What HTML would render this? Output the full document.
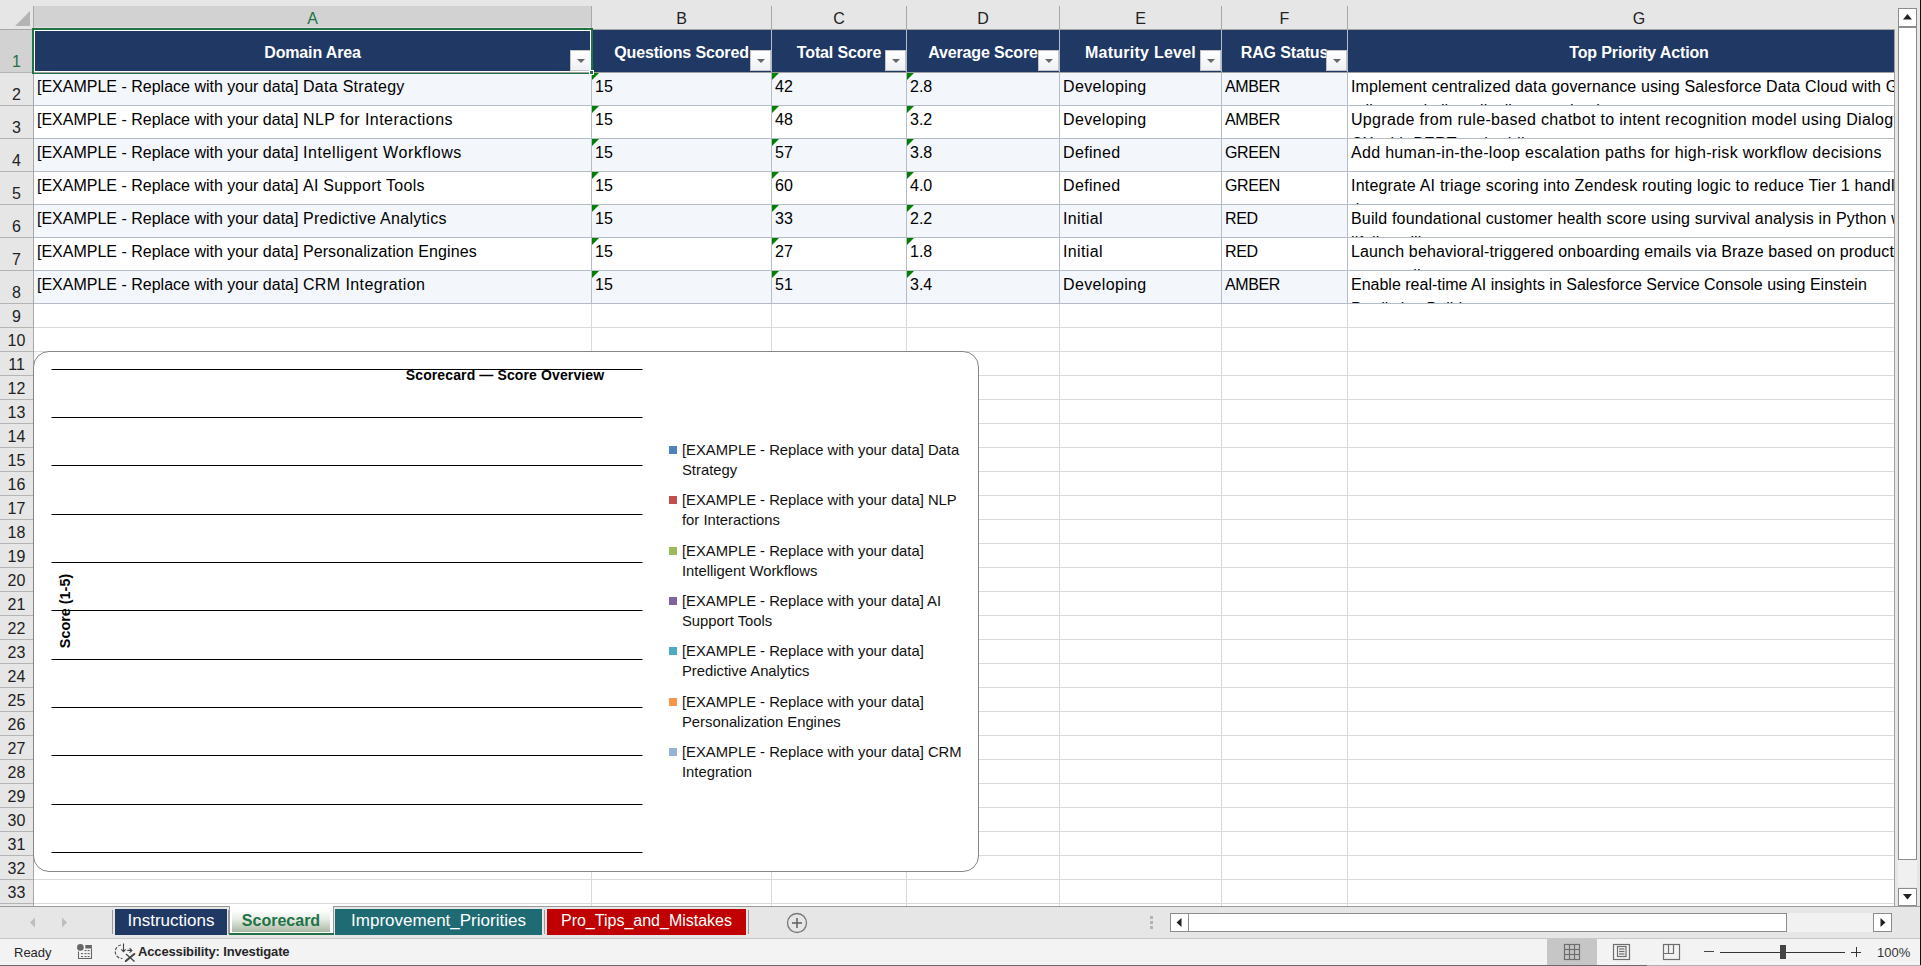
<!DOCTYPE html>
<html><head><meta charset="utf-8"><style>
*{margin:0;padding:0;box-sizing:border-box}
html,body{width:1921px;height:966px;overflow:hidden;background:#fff;font-family:"Liberation Sans",sans-serif;color:#000}
div{position:absolute}
.t{white-space:nowrap;line-height:18px;font-size:16px}
.hd{color:#fff;font-weight:bold;font-size:16px;letter-spacing:-0.15px;text-align:center;line-height:18px;white-space:nowrap}
.cl{font-size:16px;line-height:18px;text-align:center;color:#222;white-space:nowrap}
.rn{font-size:16px;line-height:18px;text-align:center;color:#222;white-space:nowrap}
.dd{width:21px;height:21px;border:1px solid #c4c4c4;background:linear-gradient(#fff,#eef0f4)}
.dd:after{content:"";position:absolute;left:6px;top:8px;border-left:4px solid transparent;border-right:4px solid transparent;border-top:4px solid #666}
.gt{width:0;height:0;border-top:7px solid #008000;border-right:7px solid transparent}
</style></head>
<body>
<div style="left:0px;top:0px;width:1921px;height:30px;background:#e6e6e6"></div>
<svg style="position:absolute;left:0;top:0" width="34" height="30"><polygon points="30,11 30,26 15,26" fill="#b4b4b4"/></svg>
<div style="left:34px;top:6px;width:557px;height:22px;background:#d2d2d2"></div>
<div style="left:34px;top:27px;width:557px;height:1px;background:#e1dede"></div>
<div style="left:33px;top:6px;width:1px;height:23px;background:#a9a9a9"></div>
<div style="left:591px;top:6px;width:1px;height:23px;background:#a9a9a9"></div>
<div style="left:771px;top:6px;width:1px;height:23px;background:#a9a9a9"></div>
<div style="left:906px;top:6px;width:1px;height:23px;background:#a9a9a9"></div>
<div style="left:1059px;top:6px;width:1px;height:23px;background:#a9a9a9"></div>
<div style="left:1221px;top:6px;width:1px;height:23px;background:#a9a9a9"></div>
<div style="left:1347px;top:6px;width:1px;height:23px;background:#a9a9a9"></div>
<div style="left:0px;top:29px;width:1894px;height:1px;background:#a6a6a6"></div>
<div style="left:0px;top:30px;width:33px;height:876px;background:#e6e6e6"></div>
<div style="left:0px;top:30px;width:33px;height:42px;background:#d2d2d2"></div>
<div style="left:33px;top:30px;width:1px;height:876px;background:#a9a9a9"></div>
<div style="left:0px;top:72px;width:33px;height:1px;background:#b4b4b4"></div>
<div style="left:0px;top:105px;width:33px;height:1px;background:#b4b4b4"></div>
<div style="left:0px;top:138px;width:33px;height:1px;background:#b4b4b4"></div>
<div style="left:0px;top:171px;width:33px;height:1px;background:#b4b4b4"></div>
<div style="left:0px;top:204px;width:33px;height:1px;background:#b4b4b4"></div>
<div style="left:0px;top:237px;width:33px;height:1px;background:#b4b4b4"></div>
<div style="left:0px;top:270px;width:33px;height:1px;background:#b4b4b4"></div>
<div style="left:0px;top:303px;width:33px;height:1px;background:#b4b4b4"></div>
<div style="left:0px;top:327px;width:33px;height:1px;background:#b4b4b4"></div>
<div style="left:0px;top:351px;width:33px;height:1px;background:#b4b4b4"></div>
<div style="left:0px;top:375px;width:33px;height:1px;background:#b4b4b4"></div>
<div style="left:0px;top:399px;width:33px;height:1px;background:#b4b4b4"></div>
<div style="left:0px;top:423px;width:33px;height:1px;background:#b4b4b4"></div>
<div style="left:0px;top:447px;width:33px;height:1px;background:#b4b4b4"></div>
<div style="left:0px;top:471px;width:33px;height:1px;background:#b4b4b4"></div>
<div style="left:0px;top:495px;width:33px;height:1px;background:#b4b4b4"></div>
<div style="left:0px;top:519px;width:33px;height:1px;background:#b4b4b4"></div>
<div style="left:0px;top:543px;width:33px;height:1px;background:#b4b4b4"></div>
<div style="left:0px;top:567px;width:33px;height:1px;background:#b4b4b4"></div>
<div style="left:0px;top:591px;width:33px;height:1px;background:#b4b4b4"></div>
<div style="left:0px;top:615px;width:33px;height:1px;background:#b4b4b4"></div>
<div style="left:0px;top:639px;width:33px;height:1px;background:#b4b4b4"></div>
<div style="left:0px;top:663px;width:33px;height:1px;background:#b4b4b4"></div>
<div style="left:0px;top:687px;width:33px;height:1px;background:#b4b4b4"></div>
<div style="left:0px;top:711px;width:33px;height:1px;background:#b4b4b4"></div>
<div style="left:0px;top:735px;width:33px;height:1px;background:#b4b4b4"></div>
<div style="left:0px;top:759px;width:33px;height:1px;background:#b4b4b4"></div>
<div style="left:0px;top:783px;width:33px;height:1px;background:#b4b4b4"></div>
<div style="left:0px;top:807px;width:33px;height:1px;background:#b4b4b4"></div>
<div style="left:0px;top:831px;width:33px;height:1px;background:#b4b4b4"></div>
<div style="left:0px;top:855px;width:33px;height:1px;background:#b4b4b4"></div>
<div style="left:0px;top:879px;width:33px;height:1px;background:#b4b4b4"></div>
<div style="left:0px;top:903px;width:33px;height:1px;background:#b4b4b4"></div>
<div class="cl" style="left:34px;top:10px;width:557px;color:#217346;">A</div>
<div class="cl" style="left:592px;top:10px;width:179px;">B</div>
<div class="cl" style="left:772px;top:10px;width:134px;">C</div>
<div class="cl" style="left:907px;top:10px;width:152px;">D</div>
<div class="cl" style="left:1060px;top:10px;width:161px;">E</div>
<div class="cl" style="left:1222px;top:10px;width:125px;">F</div>
<div class="cl" style="left:1348px;top:10px;width:582px;">G</div>
<div class="rn" style="left:0;top:53px;width:33px;color:#217346;">1</div>
<div class="rn" style="left:0;top:86px;width:33px;">2</div>
<div class="rn" style="left:0;top:119px;width:33px;">3</div>
<div class="rn" style="left:0;top:152px;width:33px;">4</div>
<div class="rn" style="left:0;top:185px;width:33px;">5</div>
<div class="rn" style="left:0;top:218px;width:33px;">6</div>
<div class="rn" style="left:0;top:251px;width:33px;">7</div>
<div class="rn" style="left:0;top:284px;width:33px;">8</div>
<div class="rn" style="left:0;top:308px;width:33px;">9</div>
<div class="rn" style="left:0;top:332px;width:33px;">10</div>
<div class="rn" style="left:0;top:356px;width:33px;">11</div>
<div class="rn" style="left:0;top:380px;width:33px;">12</div>
<div class="rn" style="left:0;top:404px;width:33px;">13</div>
<div class="rn" style="left:0;top:428px;width:33px;">14</div>
<div class="rn" style="left:0;top:452px;width:33px;">15</div>
<div class="rn" style="left:0;top:476px;width:33px;">16</div>
<div class="rn" style="left:0;top:500px;width:33px;">17</div>
<div class="rn" style="left:0;top:524px;width:33px;">18</div>
<div class="rn" style="left:0;top:548px;width:33px;">19</div>
<div class="rn" style="left:0;top:572px;width:33px;">20</div>
<div class="rn" style="left:0;top:596px;width:33px;">21</div>
<div class="rn" style="left:0;top:620px;width:33px;">22</div>
<div class="rn" style="left:0;top:644px;width:33px;">23</div>
<div class="rn" style="left:0;top:668px;width:33px;">24</div>
<div class="rn" style="left:0;top:692px;width:33px;">25</div>
<div class="rn" style="left:0;top:716px;width:33px;">26</div>
<div class="rn" style="left:0;top:740px;width:33px;">27</div>
<div class="rn" style="left:0;top:764px;width:33px;">28</div>
<div class="rn" style="left:0;top:788px;width:33px;">29</div>
<div class="rn" style="left:0;top:812px;width:33px;">30</div>
<div class="rn" style="left:0;top:836px;width:33px;">31</div>
<div class="rn" style="left:0;top:860px;width:33px;">32</div>
<div class="rn" style="left:0;top:884px;width:33px;">33</div>
<div style="left:591px;top:304px;width:1px;height:602px;background:#dadada"></div>
<div style="left:771px;top:304px;width:1px;height:602px;background:#dadada"></div>
<div style="left:906px;top:304px;width:1px;height:602px;background:#dadada"></div>
<div style="left:1059px;top:304px;width:1px;height:602px;background:#dadada"></div>
<div style="left:1221px;top:304px;width:1px;height:602px;background:#dadada"></div>
<div style="left:1347px;top:304px;width:1px;height:602px;background:#dadada"></div>
<div style="left:34px;top:327px;width:1860px;height:1px;background:#dadada"></div>
<div style="left:34px;top:351px;width:1860px;height:1px;background:#dadada"></div>
<div style="left:34px;top:375px;width:1860px;height:1px;background:#dadada"></div>
<div style="left:34px;top:399px;width:1860px;height:1px;background:#dadada"></div>
<div style="left:34px;top:423px;width:1860px;height:1px;background:#dadada"></div>
<div style="left:34px;top:447px;width:1860px;height:1px;background:#dadada"></div>
<div style="left:34px;top:471px;width:1860px;height:1px;background:#dadada"></div>
<div style="left:34px;top:495px;width:1860px;height:1px;background:#dadada"></div>
<div style="left:34px;top:519px;width:1860px;height:1px;background:#dadada"></div>
<div style="left:34px;top:543px;width:1860px;height:1px;background:#dadada"></div>
<div style="left:34px;top:567px;width:1860px;height:1px;background:#dadada"></div>
<div style="left:34px;top:591px;width:1860px;height:1px;background:#dadada"></div>
<div style="left:34px;top:615px;width:1860px;height:1px;background:#dadada"></div>
<div style="left:34px;top:639px;width:1860px;height:1px;background:#dadada"></div>
<div style="left:34px;top:663px;width:1860px;height:1px;background:#dadada"></div>
<div style="left:34px;top:687px;width:1860px;height:1px;background:#dadada"></div>
<div style="left:34px;top:711px;width:1860px;height:1px;background:#dadada"></div>
<div style="left:34px;top:735px;width:1860px;height:1px;background:#dadada"></div>
<div style="left:34px;top:759px;width:1860px;height:1px;background:#dadada"></div>
<div style="left:34px;top:783px;width:1860px;height:1px;background:#dadada"></div>
<div style="left:34px;top:807px;width:1860px;height:1px;background:#dadada"></div>
<div style="left:34px;top:831px;width:1860px;height:1px;background:#dadada"></div>
<div style="left:34px;top:855px;width:1860px;height:1px;background:#dadada"></div>
<div style="left:34px;top:879px;width:1860px;height:1px;background:#dadada"></div>
<div style="left:34px;top:903px;width:1860px;height:1px;background:#dadada"></div>
<div style="left:34px;top:30px;width:1860px;height:42px;background:#203864"></div>
<div style="left:591px;top:30px;width:1px;height:42px;background:#b4bcc8"></div>
<div style="left:771px;top:30px;width:1px;height:42px;background:#b4bcc8"></div>
<div style="left:906px;top:30px;width:1px;height:42px;background:#b4bcc8"></div>
<div style="left:1059px;top:30px;width:1px;height:42px;background:#b4bcc8"></div>
<div style="left:1221px;top:30px;width:1px;height:42px;background:#b4bcc8"></div>
<div style="left:1347px;top:30px;width:1px;height:42px;background:#b4bcc8"></div>
<div style="left:34px;top:72px;width:1860px;height:1px;background:#a0a0a0"></div>
<div class="hd" style="left:34px;top:44px;width:557px;">Domain Area</div>
<div class="hd" style="left:592px;top:44px;width:179px;">Questions Scored</div>
<div class="hd" style="left:772px;top:44px;width:134px;">Total Score</div>
<div class="hd" style="left:907px;top:44px;width:152px;">Average Score</div>
<div class="hd" style="left:1060px;top:44px;width:161px;letter-spacing:0.25px;">Maturity Level</div>
<div class="hd" style="left:1222px;top:44px;width:125px;">RAG Status</div>
<div class="hd" style="left:1348px;top:44px;width:582px;">Top Priority Action</div>
<div class="dd" style="left:570px;top:50px"></div>
<div class="dd" style="left:750px;top:50px"></div>
<div class="dd" style="left:885px;top:50px"></div>
<div class="dd" style="left:1038px;top:50px"></div>
<div class="dd" style="left:1200px;top:50px"></div>
<div class="dd" style="left:1326px;top:50px"></div>
<div style="left:34px;top:73px;width:1313px;height:32px;background:#f3f6fb"></div>
<div class="t" style="left:37px;top:78px">[EXAMPLE - Replace with your data] <span style="letter-spacing:0.3px">Data Strategy</span></div>
<div class="t" style="left:595px;top:78px">15</div>
<div class="t" style="left:775px;top:78px">42</div>
<div class="t" style="left:910px;top:78px">2.8</div>
<div class="t" style="left:1063px;top:78px"><span style="letter-spacing:0.35px">Developing</span></div>
<div class="t" style="left:1225px;top:78px"><span style="letter-spacing:-0.4px">AMBER</span></div>
<div style="left:1348px;top:73px;width:546px;height:32px;overflow:hidden"><div class="t" style="left:3px;top:5px;letter-spacing:0.14px">Implement centralized data governance using Salesforce Data Cloud with Genie</div><div class="t" style="left:3px;top:29px;letter-spacing:0.14px">rollout and all quality lineage checks</div></div>
<div style="left:34px;top:105px;width:1860px;height:1px;background:#b4bcc8"></div>
<div style="left:591px;top:73px;width:1px;height:32px;background:#b4bcc8"></div>
<div style="left:771px;top:73px;width:1px;height:32px;background:#b4bcc8"></div>
<div style="left:906px;top:73px;width:1px;height:32px;background:#b4bcc8"></div>
<div style="left:1059px;top:73px;width:1px;height:32px;background:#b4bcc8"></div>
<div style="left:1221px;top:73px;width:1px;height:32px;background:#b4bcc8"></div>
<div style="left:1347px;top:73px;width:1px;height:32px;background:#b4bcc8"></div>
<div class="gt" style="left:592px;top:73px"></div>
<div class="gt" style="left:772px;top:73px"></div>
<div class="gt" style="left:907px;top:73px"></div>
<div style="left:34px;top:106px;width:1313px;height:32px;background:#ffffff"></div>
<div class="t" style="left:37px;top:111px">[EXAMPLE - Replace with your data] <span style="letter-spacing:0.45px">NLP for Interactions</span></div>
<div class="t" style="left:595px;top:111px">15</div>
<div class="t" style="left:775px;top:111px">48</div>
<div class="t" style="left:910px;top:111px">3.2</div>
<div class="t" style="left:1063px;top:111px"><span style="letter-spacing:0.35px">Developing</span></div>
<div class="t" style="left:1225px;top:111px"><span style="letter-spacing:-0.4px">AMBER</span></div>
<div style="left:1348px;top:106px;width:546px;height:32px;overflow:hidden"><div class="t" style="left:3px;top:5px;letter-spacing:0.32px">Upgrade from rule-based chatbot to intent recognition model using Dialogflow</div><div class="t" style="left:3px;top:29px;letter-spacing:0.32px">CX with BERT embeddings</div></div>
<div style="left:34px;top:138px;width:1860px;height:1px;background:#b4bcc8"></div>
<div style="left:591px;top:106px;width:1px;height:32px;background:#b4bcc8"></div>
<div style="left:771px;top:106px;width:1px;height:32px;background:#b4bcc8"></div>
<div style="left:906px;top:106px;width:1px;height:32px;background:#b4bcc8"></div>
<div style="left:1059px;top:106px;width:1px;height:32px;background:#b4bcc8"></div>
<div style="left:1221px;top:106px;width:1px;height:32px;background:#b4bcc8"></div>
<div style="left:1347px;top:106px;width:1px;height:32px;background:#b4bcc8"></div>
<div class="gt" style="left:592px;top:106px"></div>
<div class="gt" style="left:772px;top:106px"></div>
<div class="gt" style="left:907px;top:106px"></div>
<div style="left:34px;top:139px;width:1313px;height:32px;background:#f3f6fb"></div>
<div class="t" style="left:37px;top:144px">[EXAMPLE - Replace with your data] <span style="letter-spacing:0.6px">Intelligent Workflows</span></div>
<div class="t" style="left:595px;top:144px">15</div>
<div class="t" style="left:775px;top:144px">57</div>
<div class="t" style="left:910px;top:144px">3.8</div>
<div class="t" style="left:1063px;top:144px"><span style="letter-spacing:0.35px">Defined</span></div>
<div class="t" style="left:1225px;top:144px"><span style="letter-spacing:-0.4px">GREEN</span></div>
<div style="left:1348px;top:139px;width:546px;height:32px;overflow:hidden"><div class="t" style="left:3px;top:5px;letter-spacing:0.31px">Add human-in-the-loop escalation paths for high-risk workflow decisions</div><div class="t" style="left:3px;top:29px;letter-spacing:0.31px"></div></div>
<div style="left:34px;top:171px;width:1860px;height:1px;background:#b4bcc8"></div>
<div style="left:591px;top:139px;width:1px;height:32px;background:#b4bcc8"></div>
<div style="left:771px;top:139px;width:1px;height:32px;background:#b4bcc8"></div>
<div style="left:906px;top:139px;width:1px;height:32px;background:#b4bcc8"></div>
<div style="left:1059px;top:139px;width:1px;height:32px;background:#b4bcc8"></div>
<div style="left:1221px;top:139px;width:1px;height:32px;background:#b4bcc8"></div>
<div style="left:1347px;top:139px;width:1px;height:32px;background:#b4bcc8"></div>
<div class="gt" style="left:592px;top:139px"></div>
<div class="gt" style="left:772px;top:139px"></div>
<div class="gt" style="left:907px;top:139px"></div>
<div style="left:34px;top:172px;width:1313px;height:32px;background:#ffffff"></div>
<div class="t" style="left:37px;top:177px">[EXAMPLE - Replace with your data] <span style="letter-spacing:0.3px">AI Support Tools</span></div>
<div class="t" style="left:595px;top:177px">15</div>
<div class="t" style="left:775px;top:177px">60</div>
<div class="t" style="left:910px;top:177px">4.0</div>
<div class="t" style="left:1063px;top:177px"><span style="letter-spacing:0.35px">Defined</span></div>
<div class="t" style="left:1225px;top:177px"><span style="letter-spacing:-0.4px">GREEN</span></div>
<div style="left:1348px;top:172px;width:546px;height:32px;overflow:hidden"><div class="t" style="left:3px;top:5px;letter-spacing:0.2px">Integrate AI triage scoring into Zendesk routing logic to reduce Tier 1 handle</div><div class="t" style="left:3px;top:29px;letter-spacing:0.2px">time</div></div>
<div style="left:34px;top:204px;width:1860px;height:1px;background:#b4bcc8"></div>
<div style="left:591px;top:172px;width:1px;height:32px;background:#b4bcc8"></div>
<div style="left:771px;top:172px;width:1px;height:32px;background:#b4bcc8"></div>
<div style="left:906px;top:172px;width:1px;height:32px;background:#b4bcc8"></div>
<div style="left:1059px;top:172px;width:1px;height:32px;background:#b4bcc8"></div>
<div style="left:1221px;top:172px;width:1px;height:32px;background:#b4bcc8"></div>
<div style="left:1347px;top:172px;width:1px;height:32px;background:#b4bcc8"></div>
<div class="gt" style="left:592px;top:172px"></div>
<div class="gt" style="left:772px;top:172px"></div>
<div class="gt" style="left:907px;top:172px"></div>
<div style="left:34px;top:205px;width:1313px;height:32px;background:#f3f6fb"></div>
<div class="t" style="left:37px;top:210px">[EXAMPLE - Replace with your data] <span style="letter-spacing:0.3px">Predictive Analytics</span></div>
<div class="t" style="left:595px;top:210px">15</div>
<div class="t" style="left:775px;top:210px">33</div>
<div class="t" style="left:910px;top:210px">2.2</div>
<div class="t" style="left:1063px;top:210px"><span style="letter-spacing:0.35px">Initial</span></div>
<div class="t" style="left:1225px;top:210px"><span style="letter-spacing:-0.4px">RED</span></div>
<div style="left:1348px;top:205px;width:546px;height:32px;overflow:hidden"><div class="t" style="left:3px;top:5px;letter-spacing:0.16px">Build foundational customer health score using survival analysis in Python with</div><div class="t" style="left:3px;top:29px;letter-spacing:0.16px">lifelines library</div></div>
<div style="left:34px;top:237px;width:1860px;height:1px;background:#b4bcc8"></div>
<div style="left:591px;top:205px;width:1px;height:32px;background:#b4bcc8"></div>
<div style="left:771px;top:205px;width:1px;height:32px;background:#b4bcc8"></div>
<div style="left:906px;top:205px;width:1px;height:32px;background:#b4bcc8"></div>
<div style="left:1059px;top:205px;width:1px;height:32px;background:#b4bcc8"></div>
<div style="left:1221px;top:205px;width:1px;height:32px;background:#b4bcc8"></div>
<div style="left:1347px;top:205px;width:1px;height:32px;background:#b4bcc8"></div>
<div class="gt" style="left:592px;top:205px"></div>
<div class="gt" style="left:772px;top:205px"></div>
<div class="gt" style="left:907px;top:205px"></div>
<div style="left:34px;top:238px;width:1313px;height:32px;background:#ffffff"></div>
<div class="t" style="left:37px;top:243px">[EXAMPLE - Replace with your data] <span style="letter-spacing:0.1px">Personalization Engines</span></div>
<div class="t" style="left:595px;top:243px">15</div>
<div class="t" style="left:775px;top:243px">27</div>
<div class="t" style="left:910px;top:243px">1.8</div>
<div class="t" style="left:1063px;top:243px"><span style="letter-spacing:0.35px">Initial</span></div>
<div class="t" style="left:1225px;top:243px"><span style="letter-spacing:-0.4px">RED</span></div>
<div style="left:1348px;top:238px;width:546px;height:32px;overflow:hidden"><div class="t" style="left:3px;top:5px;letter-spacing:0.13px">Launch behavioral-triggered onboarding emails via Braze based on product</div><div class="t" style="left:3px;top:29px;letter-spacing:0.13px">usage milestones</div></div>
<div style="left:34px;top:270px;width:1860px;height:1px;background:#b4bcc8"></div>
<div style="left:591px;top:238px;width:1px;height:32px;background:#b4bcc8"></div>
<div style="left:771px;top:238px;width:1px;height:32px;background:#b4bcc8"></div>
<div style="left:906px;top:238px;width:1px;height:32px;background:#b4bcc8"></div>
<div style="left:1059px;top:238px;width:1px;height:32px;background:#b4bcc8"></div>
<div style="left:1221px;top:238px;width:1px;height:32px;background:#b4bcc8"></div>
<div style="left:1347px;top:238px;width:1px;height:32px;background:#b4bcc8"></div>
<div class="gt" style="left:592px;top:238px"></div>
<div class="gt" style="left:772px;top:238px"></div>
<div class="gt" style="left:907px;top:238px"></div>
<div style="left:34px;top:271px;width:1313px;height:32px;background:#f3f6fb"></div>
<div class="t" style="left:37px;top:276px">[EXAMPLE - Replace with your data] <span style="letter-spacing:0.4px">CRM Integration</span></div>
<div class="t" style="left:595px;top:276px">15</div>
<div class="t" style="left:775px;top:276px">51</div>
<div class="t" style="left:910px;top:276px">3.4</div>
<div class="t" style="left:1063px;top:276px"><span style="letter-spacing:0.35px">Developing</span></div>
<div class="t" style="left:1225px;top:276px"><span style="letter-spacing:-0.4px">AMBER</span></div>
<div style="left:1348px;top:271px;width:546px;height:32px;overflow:hidden"><div class="t" style="left:3px;top:5px;letter-spacing:0.0px">Enable real-time AI insights in Salesforce Service Console using Einstein</div><div class="t" style="left:3px;top:29px;letter-spacing:0.0px">Prediction Builder</div></div>
<div style="left:34px;top:303px;width:1860px;height:1px;background:#b4bcc8"></div>
<div style="left:591px;top:271px;width:1px;height:32px;background:#b4bcc8"></div>
<div style="left:771px;top:271px;width:1px;height:32px;background:#b4bcc8"></div>
<div style="left:906px;top:271px;width:1px;height:32px;background:#b4bcc8"></div>
<div style="left:1059px;top:271px;width:1px;height:32px;background:#b4bcc8"></div>
<div style="left:1221px;top:271px;width:1px;height:32px;background:#b4bcc8"></div>
<div style="left:1347px;top:271px;width:1px;height:32px;background:#b4bcc8"></div>
<div class="gt" style="left:592px;top:271px"></div>
<div class="gt" style="left:772px;top:271px"></div>
<div class="gt" style="left:907px;top:271px"></div>
<div style="left:32px;top:28px;width:561px;height:2px;background:#217346"></div>
<div style="left:32px;top:28px;width:2px;height:46px;background:#217346"></div>
<div style="left:591px;top:28px;width:2px;height:46px;background:#217346"></div>
<div style="left:32px;top:73px;width:557px;height:1px;background:#217346"></div>
<div style="left:34px;top:30px;width:557px;height:1px;background:#fff"></div>
<div style="left:34px;top:71px;width:557px;height:1px;background:#fff"></div>
<div style="left:34px;top:30px;width:1px;height:42px;background:#fff"></div>
<div style="left:590px;top:30px;width:1px;height:42px;background:#fff"></div>
<div style="left:589px;top:70px;width:5px;height:5px;background:#217346;border:1px solid #fff"></div>
<div style="left:1894px;top:29px;width:1px;height:878px;background:#a0a0a0"></div>
<div style="left:1895px;top:0px;width:26px;height:907px;background:#e6e6e6"></div>
<div style="left:1898px;top:8px;width:19px;height:19px;background:#fff;border:1px solid #8c8c8c"></div>
<svg style="position:absolute;left:1898px;top:8px" width="19" height="19"><polygon points="5,11.5 14,11.5 9.5,6" fill="#222"/></svg>
<div style="left:1898px;top:27px;width:19px;height:860px;background:#f0f0f0"></div>
<div style="left:1898px;top:27px;width:19px;height:833px;background:#fff;border:1px solid #8c8c8c"></div>
<div style="left:1898px;top:888px;width:19px;height:18px;background:#fff;border:1px solid #8c8c8c"></div>
<svg style="position:absolute;left:1898px;top:888px" width="19" height="18"><polygon points="5,6 14,6 9.5,11.5" fill="#222"/></svg>
<div style="left:1920px;top:0px;width:1px;height:966px;background:#111"></div>
<div style="left:33px;top:351px;width:946px;height:521px;border:1px solid #868686;border-radius:16px;background:#fff"></div>
<svg style="position:absolute;left:0;top:0" width="1000" height="900"><line x1="51.5" y1="369.50" x2="642.5" y2="369.50" stroke="#000" stroke-width="1.2"/><line x1="51.5" y1="417.50" x2="642.5" y2="417.50" stroke="#000" stroke-width="1.2"/><line x1="51.5" y1="465.50" x2="642.5" y2="465.50" stroke="#000" stroke-width="1.2"/><line x1="51.5" y1="514.50" x2="642.5" y2="514.50" stroke="#000" stroke-width="1.2"/><line x1="51.5" y1="562.50" x2="642.5" y2="562.50" stroke="#000" stroke-width="1.2"/><line x1="51.5" y1="610.50" x2="642.5" y2="610.50" stroke="#000" stroke-width="1.2"/><line x1="51.5" y1="659.50" x2="642.5" y2="659.50" stroke="#000" stroke-width="1.2"/><line x1="51.5" y1="707.50" x2="642.5" y2="707.50" stroke="#000" stroke-width="1.2"/><line x1="51.5" y1="755.50" x2="642.5" y2="755.50" stroke="#000" stroke-width="1.2"/><line x1="51.5" y1="804.50" x2="642.5" y2="804.50" stroke="#000" stroke-width="1.2"/><line x1="51.5" y1="852.50" x2="642.5" y2="852.50" stroke="#000" stroke-width="1.2"/></svg>
<div style="left:305px;top:367px;width:400px;text-align:center;font-weight:bold;font-size:14px;line-height:16px;letter-spacing:0.12px;white-space:nowrap">Scorecard — Score Overview</div>
<div style="left:14.5px;top:602.75px;width:100px;height:16px;text-align:center;font-weight:bold;font-size:14.4px;line-height:16px;white-space:nowrap;transform:rotate(-90deg)">Score (1-5)</div>
<div style="left:669px;top:446.00px;width:8px;height:8px;background:#4F81BD"></div>
<div style="left:682px;top:440.00px;font-size:14.8px;line-height:20px;white-space:nowrap;color:#111">[EXAMPLE - Replace with your data] Data<br>Strategy</div>
<div style="left:669px;top:496.33px;width:8px;height:8px;background:#C0504D"></div>
<div style="left:682px;top:490.33px;font-size:14.8px;line-height:20px;white-space:nowrap;color:#111">[EXAMPLE - Replace with your data] NLP<br>for Interactions</div>
<div style="left:669px;top:546.66px;width:8px;height:8px;background:#9BBB59"></div>
<div style="left:682px;top:540.66px;font-size:14.8px;line-height:20px;white-space:nowrap;color:#111">[EXAMPLE - Replace with your data]<br>Intelligent Workflows</div>
<div style="left:669px;top:596.99px;width:8px;height:8px;background:#8064A2"></div>
<div style="left:682px;top:590.99px;font-size:14.8px;line-height:20px;white-space:nowrap;color:#111">[EXAMPLE - Replace with your data] AI<br>Support Tools</div>
<div style="left:669px;top:647.32px;width:8px;height:8px;background:#4BACC6"></div>
<div style="left:682px;top:641.32px;font-size:14.8px;line-height:20px;white-space:nowrap;color:#111">[EXAMPLE - Replace with your data]<br>Predictive Analytics</div>
<div style="left:669px;top:697.65px;width:8px;height:8px;background:#F79646"></div>
<div style="left:682px;top:691.65px;font-size:14.8px;line-height:20px;white-space:nowrap;color:#111">[EXAMPLE - Replace with your data]<br>Personalization Engines</div>
<div style="left:669px;top:747.98px;width:8px;height:8px;background:#95B3D7"></div>
<div style="left:682px;top:741.98px;font-size:14.8px;line-height:20px;white-space:nowrap;color:#111">[EXAMPLE - Replace with your data] CRM<br>Integration</div>
<div style="left:0;top:906px;width:1920px;height:1px;background:#9a9a9a"></div>
<div style="left:0;top:907px;width:1920px;height:31px;background:#e6e6e6"></div>
<div style="left:0;top:938px;width:1920px;height:1px;background:#c8c8c8"></div>
<div style="left:0;top:939px;width:1920px;height:26px;background:#f3f3f3"></div>
<div style="left:0;top:965px;width:1647px;height:1px;background:#6a6a6a"></div><div style="left:1647px;top:965px;width:274px;height:1px;background:#b0b0b0"></div>
<svg style="position:absolute;left:0;top:907px" width="110" height="31"><polygon points="35,10.6 35,20.6 30,15.6" fill="#bdbdbd"/><polygon points="62,10.6 62,20.6 67,15.6" fill="#bdbdbd"/></svg>
<div style="left:112px;top:910px;width:1px;height:24px;background:#9a9a9a"></div>
<div style="left:228px;top:910px;width:1px;height:24px;background:#9a9a9a"></div>
<div style="left:333px;top:910px;width:1px;height:24px;background:#9a9a9a"></div>
<div style="left:544px;top:910px;width:1px;height:24px;background:#9a9a9a"></div>
<div style="left:748px;top:910px;width:1px;height:24px;background:#9a9a9a"></div>
<div style="left:115px;top:909px;width:112px;height:26px;background:#203864"></div>
<div style="left:115px;top:911px;width:112px;text-align:center;color:#fff;font-size:17px;line-height:20px;white-space:nowrap">Instructions</div>
<div style="left:229px;top:906px;width:105px;height:29px;background:#fff;border-left:1px solid #9a9a9a;border-right:1px solid #9a9a9a"></div>
<div style="left:232px;top:909px;width:98px;height:23px;background:linear-gradient(#ffffff 5%,#e6ebe4 45%,#a9b8a3)"></div>
<div style="left:229px;top:933px;width:105px;height:2px;background:#217346"></div>
<div style="left:229px;top:911px;width:104px;text-align:center;color:#217346;font-weight:bold;font-size:16px;line-height:20px;white-space:nowrap">Scorecard</div>
<div style="left:335px;top:909px;width:207px;height:26px;background:#1e6b74"></div>
<div style="left:335px;top:911px;width:207px;text-align:center;color:#fff;font-size:17px;line-height:20px;white-space:nowrap">Improvement_Priorities</div>
<div style="left:547px;top:909px;width:199px;height:26px;background:#c00000"></div>
<div style="left:547px;top:911px;width:199px;text-align:center;color:#fff;font-size:16px;line-height:20px;white-space:nowrap">Pro_Tips_and_Mistakes</div>
<svg style="position:absolute;left:785px;top:911px" width="24" height="24"><circle cx="12" cy="12" r="9.5" fill="none" stroke="#777" stroke-width="1.3"/><line x1="7" y1="12" x2="17" y2="12" stroke="#666" stroke-width="1.6"/><line x1="12" y1="7" x2="12" y2="17" stroke="#666" stroke-width="1.6"/></svg>
<svg style="position:absolute;left:1148px;top:914px" width="8" height="18"><rect x="2" y="2" width="3" height="3" fill="#b4b4b4"/><rect x="2" y="7" width="3" height="3" fill="#b4b4b4"/><rect x="2" y="12" width="3" height="3" fill="#b4b4b4"/></svg>
<div style="left:1170px;top:913px;width:722px;height:19px;background:#f1f1f1"></div>
<div style="left:1170px;top:913px;width:19px;height:19px;background:#fff;border:1px solid #8c8c8c"></div>
<svg style="position:absolute;left:1170px;top:913px" width="19" height="19"><polygon points="6.5,9.5 11.5,5 11.5,14" fill="#222"/></svg>
<div style="left:1188px;top:913px;width:599px;height:19px;background:#fff;border:1px solid #8c8c8c"></div>
<div style="left:1873px;top:913px;width:19px;height:19px;background:#fff;border:1px solid #8c8c8c"></div>
<svg style="position:absolute;left:1873px;top:913px" width="19" height="19"><polygon points="12.5,9.5 7.5,5 7.5,14" fill="#222"/></svg>
<div style="left:14px;top:945px;font-size:13px;line-height:16px;color:#262626;white-space:nowrap">Ready</div>
<svg style="position:absolute;left:60px;top:938px" width="90" height="28"><g fill="#666"><circle cx="20.4" cy="9.4" r="3.3"/><rect x="25.3" y="7" width="6.6" height="3.5"/><rect x="24.5" y="12" width="2" height="1.1"/><rect x="27.6" y="12" width="2" height="1.1"/><rect x="21" y="15" width="2" height="1.1"/><rect x="24.5" y="15" width="2" height="1.1"/><rect x="27.6" y="15" width="2" height="1.1"/><rect x="21" y="18" width="2" height="1.1"/><rect x="24.5" y="18" width="2" height="1.1"/><rect x="27.6" y="18" width="2" height="1.1"/></g><path d="M18.5 13.5 V20.5 H31.5 V10.5" fill="none" stroke="#666" stroke-width="1.1"/><path d="M61 7 A6.8 6.8 0 0 0 62.5 20.5" fill="none" stroke="#555" stroke-width="1.2" stroke-dasharray="3 1.6"/><path d="M63.5 5.5 V13.5 M61.3 11.3 L63.5 13.7 L65.7 11.3 M67.3 12.4 H71.8 M69.6 10.2 L71.9 12.4 L69.6 14.6" fill="none" stroke="#444" stroke-width="1.1"/><path d="M65.8 23 L74.3 16" stroke="#444" stroke-width="2.1" stroke-linecap="round"/><path d="M66 16 L74.5 23.5" stroke="#444" stroke-width="1.3"/></svg>
<div style="left:138px;top:944px;font-size:13px;letter-spacing:-0.15px;font-weight:bold;line-height:16px;color:#262626;white-space:nowrap">Accessibility: Investigate</div>
<div style="left:1547px;top:939px;width:50px;height:26px;background:#c6c6c6"></div>
<svg style="position:absolute;left:1540px;top:936px" width="160" height="30"><g fill="none" stroke="#6e6e6e" stroke-width="1.2"><rect x="24.5" y="8.5" width="15" height="15"/><line x1="29.5" y1="8.5" x2="29.5" y2="23.5"/><line x1="34.5" y1="8.5" x2="34.5" y2="23.5"/><line x1="24.5" y1="13.5" x2="39.5" y2="13.5"/><line x1="24.5" y1="18.5" x2="39.5" y2="18.5"/><rect x="73.5" y="8.5" width="16" height="15"/><rect x="77.5" y="10.5" width="8.5" height="10"/><line x1="79" y1="13" x2="84.5" y2="13"/><line x1="79" y1="15.5" x2="84.5" y2="15.5"/><line x1="79" y1="18" x2="84.5" y2="18"/><rect x="123.5" y="8.5" width="16" height="15"/><polyline points="133.5,8.5 133.5,17.5 123.5,17.5"/><line x1="128.5" y1="8.5" x2="128.5" y2="17.5"/></g></svg>
<div style="left:1704px;top:951px;width:10px;height:1.2px;background:#444"></div>
<div style="left:1720px;top:952px;width:125px;height:1.2px;background:#333"></div>
<div style="left:1780px;top:945px;width:6px;height:14px;background:#444"></div>
<div style="left:1851px;top:951.5px;width:10px;height:1.2px;background:#333"></div>
<div style="left:1855.5px;top:947px;width:1.2px;height:10px;background:#333"></div>
<div style="left:1877px;top:945px;font-size:13px;line-height:16px;color:#333;white-space:nowrap">100%</div>
</body></html>
